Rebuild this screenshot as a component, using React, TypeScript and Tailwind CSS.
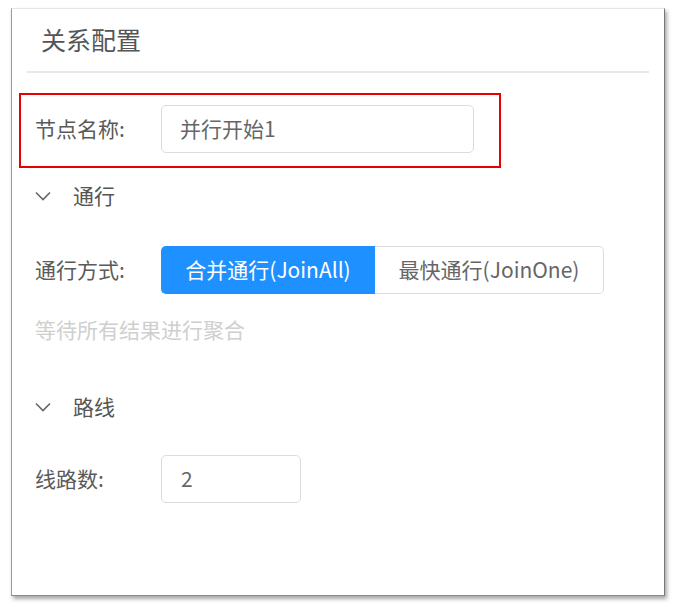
const font = { fontFamily: '"Noto Sans CJK SC", "Noto Sans", sans-serif' };

function SectionHeader({ title }: { title: string }) {
  return (
    <div className="flex h-[30px] items-center text-[21px] text-[#555]">
      <svg width="16" height="10" viewBox="0 0 16 10" className="text-[#666]">
        <polyline points="1,1.5 8,8.5 15,1.5" fill="none" stroke="currentColor" strokeWidth="1.6" />
      </svg>
      <span className="ml-[22px]">{title}</span>
    </div>
  );
}

function FieldLabel({ children }: { children: string }) {
  return <div className="w-[126px] shrink-0 text-[21px] text-[#5a5a5a]">{children}</div>;
}

export default function App() {
  return (
    <div className="min-h-[611px] bg-white pl-[11px] pt-[8px]" style={font}>
      <div className="h-[588px] w-[654px] border border-l-[#9a9a9a] border-t-[#e6e6e6] border-r-[#777] border-b-[#8a8a8a] bg-white px-[15px] shadow-[2px_3px_4px_rgba(0,0,0,0.35)]">
        <div className="flex h-[64px] items-center border-b-2 border-[#e8e8e8] pl-[14px] text-[25px] text-[#555]">
          关系配置
        </div>

        <div className="pl-[8px]">
          <div className="relative mt-[32px] flex items-center">
            <div className="pointer-events-none absolute left-[-16px] top-[-12px] h-[75px] w-[482px] border-2 border-[#e60000]" />
            <FieldLabel>节点名称:</FieldLabel>
            <div className="flex h-[48px] w-[313px] items-center rounded-[5px] border border-[#dcdcdc] px-[18px] text-[21px] text-[#666]">
              并行开始1
            </div>
          </div>

          <div className="mt-[28px]">
            <SectionHeader title="通行" />
          </div>

          <div className="mt-[35px] flex items-center">
            <FieldLabel>通行方式:</FieldLabel>
            <div className="flex h-[48px] text-[21px]">
              <div className="flex w-[214px] items-center justify-center rounded-l-[5px] bg-[#1e90ff] text-white">
                合并通行(JoinAll)
              </div>
              <div className="flex w-[229px] items-center justify-center rounded-r-[5px] border border-l-0 border-[#dcdcdc] text-[#666]">
                最快通行(JoinOne)
              </div>
            </div>
          </div>

          <div className="mt-[20px] text-[21px] text-[#cfcfcf]">等待所有结果进行聚合</div>

          <div className="mt-[46px]">
            <SectionHeader title="路线" />
          </div>

          <div className="mt-[33px] flex items-center">
            <FieldLabel>线路数:</FieldLabel>
            <div className="flex h-[48px] w-[140px] items-center rounded-[5px] border border-[#dcdcdc] px-[19px] text-[21px] text-[#666]">
              2
            </div>
          </div>
        </div>
      </div>
    </div>
  );
}
